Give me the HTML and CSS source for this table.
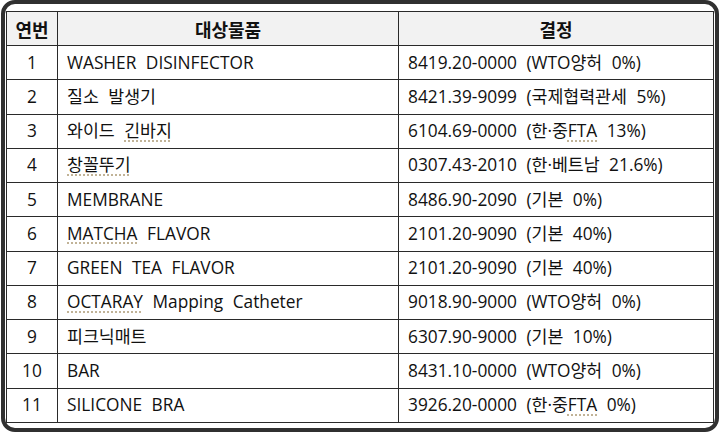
FILE: index.html
```html
<!DOCTYPE html>
<html lang="ko">
<head>
<meta charset="utf-8">
<link rel="stylesheet" href="styles.css">
</head>
<body>
<div class="frame">
<table class="tbl">
<colgroup><col class="c1"><col class="c2"><col class="c3"></colgroup>
<thead>
<tr><th>연번</th><th>대상물품</th><th>결정</th></tr>
</thead>
<tbody>
<tr><td class="num">1</td><td>WASHER DISINFECTOR</td><td>8419.20-0000 (WTO양허 0%)</td></tr>
<tr><td class="num">2</td><td>질소 발생기</td><td>8421.39-9099 (국제협력관세 5%)</td></tr>
<tr><td class="num">3</td><td>와이드 <span class="sp">긴바지</span></td><td>6104.69-0000 (한·중<span class="sp">FTA</span> 13%)</td></tr>
<tr><td class="num">4</td><td><span class="sp">창꼴뚜기</span></td><td>0307.43-2010 (한·베트남 21.6%)</td></tr>
<tr><td class="num">5</td><td>MEMBRANE</td><td>8486.90-2090 (기본 0%)</td></tr>
<tr><td class="num">6</td><td><span class="sp">MATCHA</span> FLAVOR</td><td>2101.20-9090 (기본 40%)</td></tr>
<tr><td class="num">7</td><td>GREEN TEA FLAVOR</td><td>2101.20-9090 (기본 40%)</td></tr>
<tr><td class="num">8</td><td><span class="sp">OCTARAY</span> Mapping Catheter</td><td>9018.90-9000 (WTO양허 0%)</td></tr>
<tr><td class="num">9</td><td>피크닉매트</td><td>6307.90-9000 (기본 10%)</td></tr>
<tr><td class="num">10</td><td>BAR</td><td>8431.10-0000 (WTO양허 0%)</td></tr>
<tr><td class="num">11</td><td>SILICONE BRA</td><td>3926.20-0000 (한·중<span class="sp">FTA</span> 0%)</td></tr>
</tbody>
</table>
</div>
</body>
</html>
```

FILE: styles.css
```css
html, body {
  margin: 0;
  padding: 0;
  background: #ffffff;
}

.frame {
  box-sizing: border-box;
  margin-left: 1px;
  width: 718px;
  height: 432px;
  border: 4px solid #303030;
  border-radius: 14px;
  padding: 7px 2px 4px 1px;
  background: #ffffff;
}

.tbl {
  width: 707px;
  height: 412px;
  border-collapse: collapse;
  table-layout: fixed;
  font-family: "Open Sans", "Noto Sans CJK KR", sans-serif;
  font-size: 17.3px;
  color: #111111;
  word-spacing: 5px;
}

.c1 { width: 51px; }
.c2 { width: 341px; }
.c3 { width: 315px; }

.tbl th,
.tbl td {
  border: 1px solid #2a2a2a;
  padding: 0 0 0 9px;
  line-height: 20px;
  white-space: nowrap;
  text-align: left;
}

.tbl th {
  height: 33px;
  background: #f2f2f2;
  font-weight: 700;
  font-size: 18px;
  text-align: center;
  padding: 0;
  font-family: "Noto Sans CJK KR", sans-serif;
}

.tbl td {
  height: 33px;
}

.tbl td.num {
  text-align: center;
  padding: 0;
  word-spacing: 0;
}

.sp {
  text-decoration: underline dotted #b8a888;
  text-underline-offset: 3px;
}
```
